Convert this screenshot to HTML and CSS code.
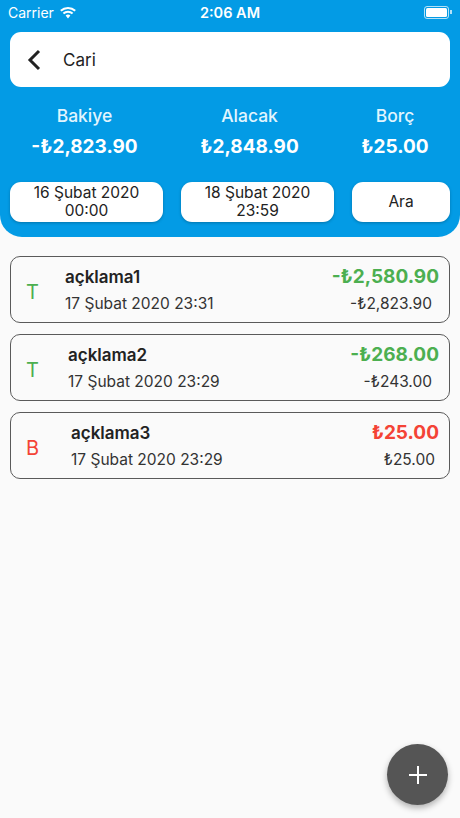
FILE: index.html
```html
<!DOCTYPE html>
<html lang="tr">
<head>
    <meta charset="UTF-8">
    <meta name="viewport" content="width=device-width, initial-scale=1.0">
    <title>Cari</title>
    <link rel="stylesheet" href="styles.css">
</head>
<body>
    <div class="header">
        <div class="status-bar">
            <div class="status-left">
                <span>Carrier</span>
                <svg width="18" height="13" viewBox="0 0 18 13">
                    <path d="M9 12.5 L6.6 9.6 A3.6 3.6 0 0 1 11.4 9.6 Z" fill="#fff"/>
                    <path d="M4.4 7.6 A6.8 6.8 0 0 1 13.6 7.6" stroke="#fff" stroke-width="2" fill="none"/>
                    <path d="M1.8 4.8 A10.6 10.6 0 0 1 16.2 4.8" stroke="#fff" stroke-width="2" fill="none"/>
                </svg>
            </div>
            <div class="status-time">2:06 AM</div>
            <div class="status-right">
                <div class="battery"><div class="battery-fill"></div></div>
                <div class="battery-tip"></div>
            </div>
        </div>

        <div class="search-bar">
            <svg class="back" width="16" height="24" viewBox="0 0 16 24">
                <path d="M13 3 L4 12 L13 21" stroke="#222" stroke-width="3" fill="none"/>
            </svg>
            <span class="search-text">Cari</span>
        </div>

        <div class="totals">
            <div class="total">
                <div class="total-label">Bakiye</div>
                <div class="total-value">-₺2,823.90</div>
            </div>
            <div class="total">
                <div class="total-label">Alacak</div>
                <div class="total-value">₺2,848.90</div>
            </div>
            <div class="total">
                <div class="total-label">Borç</div>
                <div class="total-value">₺25.00</div>
            </div>
        </div>

        <div class="filters">
            <button class="filter-btn wide">16 Şubat 2020<br>00:00</button>
            <button class="filter-btn wide">18 Şubat 2020<br>23:59</button>
            <button class="filter-btn narrow">Ara</button>
        </div>
    </div>

    <div class="list">
        <div class="item">
            <div class="item-type green">T</div>
            <div class="item-main">
                <div class="item-title">açklama1</div>
                <div class="item-date">17 Şubat 2020 23:31</div>
            </div>
            <div class="item-amounts">
                <div class="item-amount green">-₺2,580.90</div>
                <div class="item-balance">-₺2,823.90</div>
            </div>
        </div>
        <div class="item">
            <div class="item-type green">T</div>
            <div class="item-main shift1">
                <div class="item-title">açklama2</div>
                <div class="item-date">17 Şubat 2020 23:29</div>
            </div>
            <div class="item-amounts">
                <div class="item-amount green">-₺268.00</div>
                <div class="item-balance">-₺243.00</div>
            </div>
        </div>
        <div class="item">
            <div class="item-type red">B</div>
            <div class="item-main shift2">
                <div class="item-title">açklama3</div>
                <div class="item-date">17 Şubat 2020 23:29</div>
            </div>
            <div class="item-amounts">
                <div class="item-amount red">₺25.00</div>
                <div class="item-balance small-pad">₺25.00</div>
            </div>
        </div>
    </div>

    <button class="fab">
        <svg width="22" height="22" viewBox="0 0 22 22">
            <path d="M11 2 V20 M2 11 H20" stroke="#fff" stroke-width="2"/>
        </svg>
    </button>
</body>
</html>
```

FILE: styles.css
```css
body {
    margin: 0;
    height: 818px;
    background-color: #fafafa;
    font-family: Inter, "Noto Sans", sans-serif;
    color: #222;
    position: relative;
    overflow: hidden;
}
.header {
    background-color: #039be5;
    border-radius: 0 0 22px 22px;
    padding: 0 10px 13px;
    height: 224px;
}
.status-bar {
    height: 24px;
    display: flex;
    align-items: center;
    justify-content: space-between;
    color: #fff;
    font-size: 14px;
}
.status-left {
    display: flex;
    align-items: center;
    gap: 5px;
    width: 100px;
    margin-left: -2px;
}
.status-time {
    font-weight: 600;
    font-size: 14.5px;
}
.status-right {
    width: 100px;
    display: flex;
    justify-content: flex-end;
    align-items: center;
    margin-right: -2px;
}
.battery {
    width: 21px;
    height: 9px;
    border: 1px solid rgba(255, 255, 255, 0.7);
    border-radius: 3px;
    padding: 1px;
}
.battery-fill {
    width: 100%;
    height: 100%;
    background: #fff;
    border-radius: 1.5px;
}
.battery-tip {
    width: 1.5px;
    height: 4px;
    background: rgba(255, 255, 255, 0.7);
    margin-left: 1px;
}
.search-bar {
    margin-top: 8px;
    height: 55px;
    background: #fff;
    border-radius: 11px;
    display: flex;
    align-items: center;
    padding-left: 16px;
}
.back {
    margin-right: 21px;
}
.search-text {
    font-size: 17px;
    color: #222;
}
.totals {
    display: flex;
    justify-content: space-around;
    margin: 17px -10px 0;
    color: #fff;
    text-align: center;
}
.total-label {
    font-size: 17.5px;
    font-weight: 500;
    color: #e1f5fe;
    line-height: 24px;
}
.total-value {
    font-size: 19px;
    font-weight: 700;
    line-height: 24px;
    margin-top: 7px;
}
.filters {
    display: flex;
    gap: 18px;
    margin-top: 23px;
}
.filter-btn {
    height: 40px;
    border: none;
    background: #fff;
    border-radius: 11px;
    font-family: Inter, "Noto Sans", sans-serif;
    font-size: 15.5px;
    line-height: 18px;
    color: #222;
    padding: 0;
    box-shadow: 0 1px 3px rgba(0, 0, 0, 0.25);
}
.filter-btn.wide {
    flex: 0 0 153px;
}
.filter-btn.narrow {
    flex: 1;
}
.list {
    padding: 19px 10px 0;
    display: flex;
    flex-direction: column;
    gap: 11px;
}
.item {
    height: 65px;
    border: 1px solid #5a5a5a;
    border-radius: 10px;
    display: flex;
    align-items: center;
    padding: 0 10px 0 15px;
}
.item-type {
    width: 39px;
    font-size: 20px;
    padding-top: 4px;
}
.green {
    color: #4caf50;
}
.red {
    color: #f44336;
}
.item-main {
    flex: 1;
}
.item-main.shift1 {
    padding-left: 3px;
}
.item-main.shift2 {
    padding-left: 6px;
}
.item-title {
    font-size: 17px;
    font-weight: 600;
    color: #222;
    line-height: 22px;
}
.item-date {
    font-size: 15.5px;
    color: #333;
    line-height: 20px;
    margin-top: 6px;
}
.item-amounts {
    text-align: right;
}
.item-amount {
    font-size: 19px;
    font-weight: 700;
    line-height: 22px;
}
.item-balance {
    font-size: 15.5px;
    color: #333;
    line-height: 20px;
    margin-top: 6px;
    margin-right: 7px;
}
.item-balance.small-pad {
    margin-right: 4px;
}
.fab {
    position: absolute;
    left: 387px;
    top: 744px;
    width: 61px;
    height: 61px;
    border-radius: 50%;
    border: none;
    background: #555;
    display: flex;
    align-items: center;
    justify-content: center;
    box-shadow: 0 3px 6px rgba(0, 0, 0, 0.3);
}
```
